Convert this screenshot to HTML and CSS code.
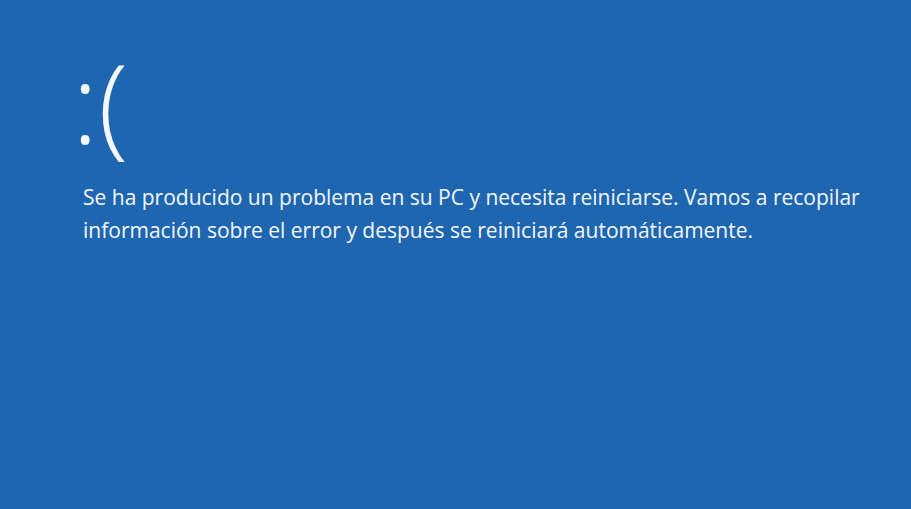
FILE: index.html
```html
<!DOCTYPE html>
<html lang="es">
<head>
<meta charset="utf-8">
<link rel="stylesheet" href="styles.css">
</head>
<body>
<main class="screen">
  <div class="face">:(</div>
  <p class="msg">Se ha producido un problema en su PC y necesita reiniciarse. Vamos a recopilar<br>información sobre el error y después se reiniciará automáticamente.</p>
</main>
</body>
</html>
```
FILE: styles.css
```css
html, body {
  margin: 0;
  height: 100%;
  background: #1f66b0;
}
.screen {
  padding: 46px 0 0 72px;
  color: #f4f7fb;
  font-family: "Open Sans", "Noto Sans", sans-serif;
}
.face {
  font-size: 110px;
  font-weight: 300;
  line-height: 1;
  height: 120px;
}
.msg {
  margin: 15px 0 0 11px;
  font-size: 21px;
  line-height: 33px;
}
```
